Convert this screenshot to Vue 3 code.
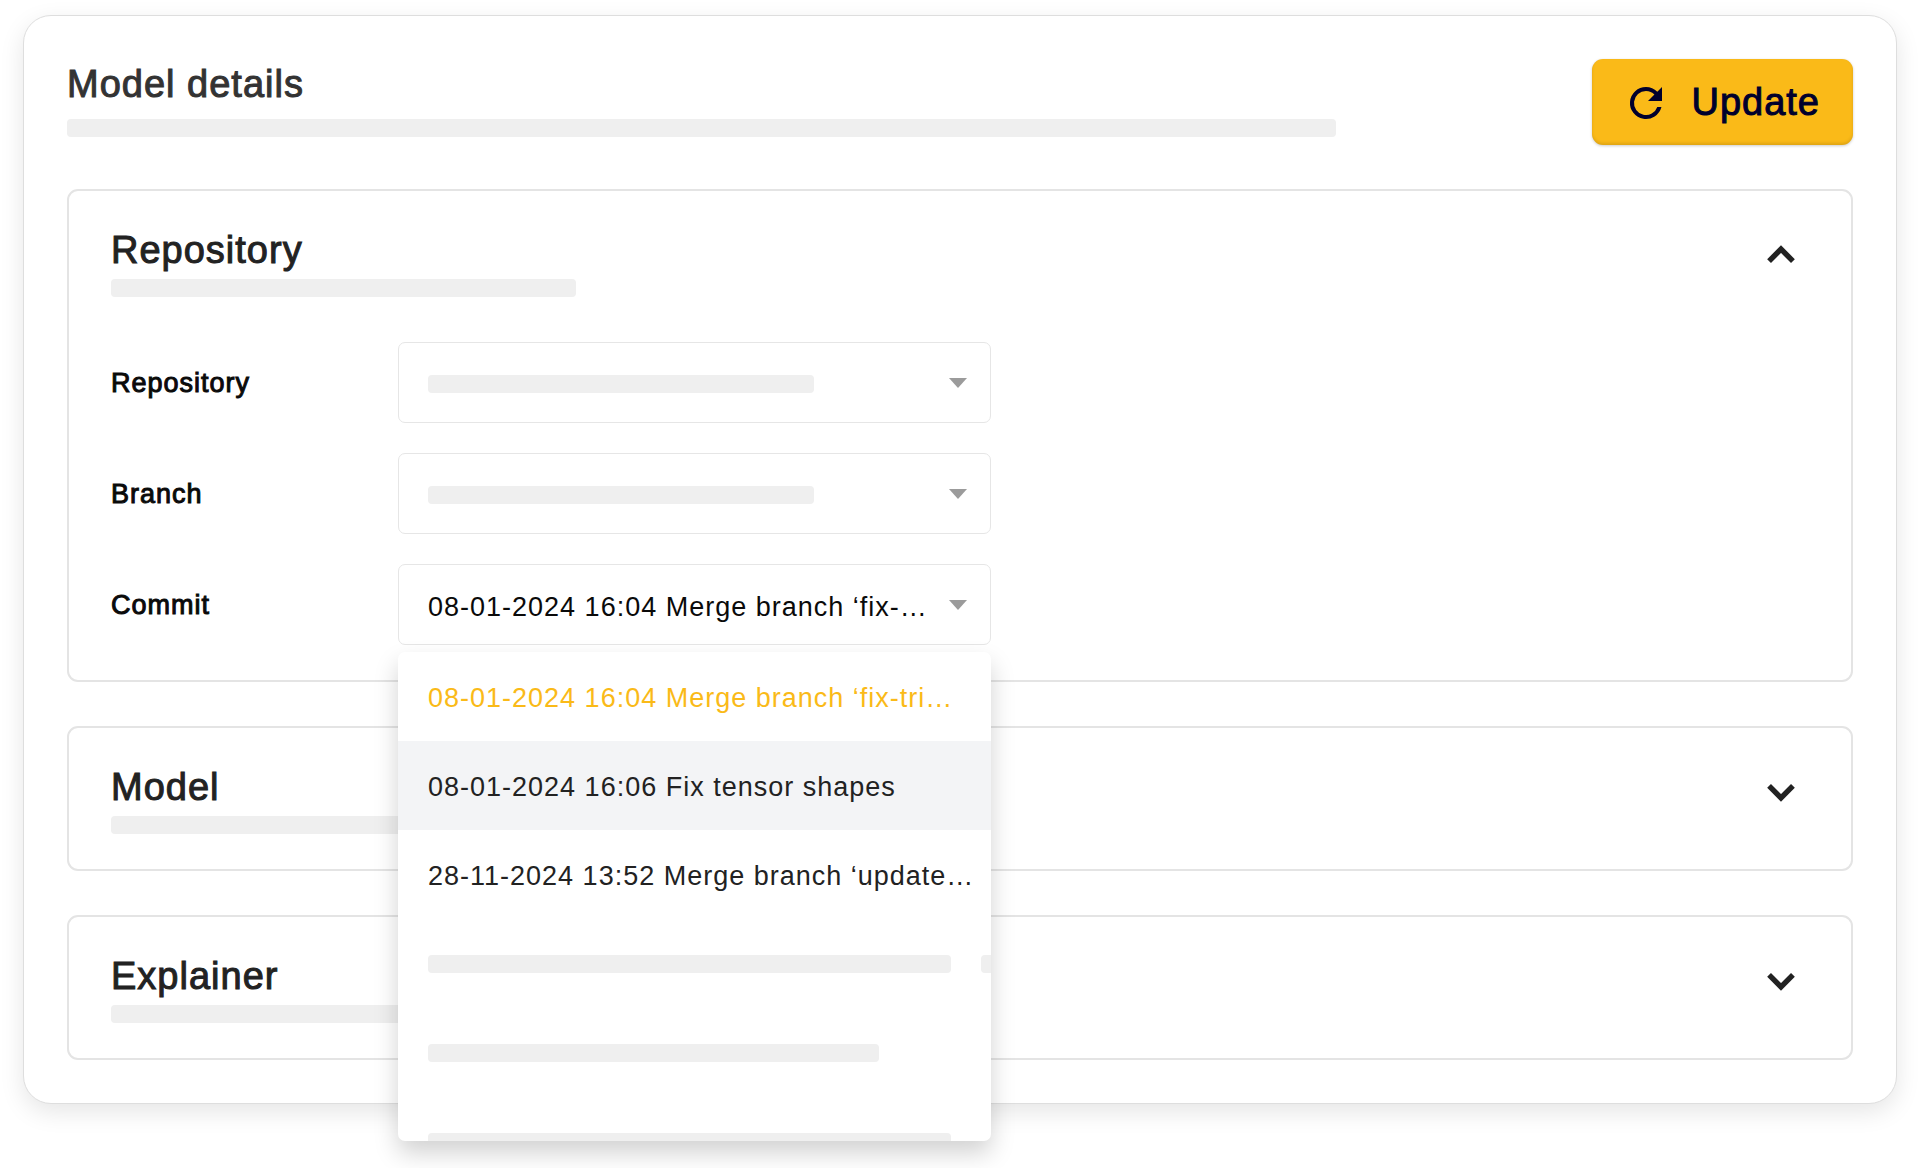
<script setup>
import { ref } from 'vue'

const fields = [
  { id: 'repository', label: 'Repository' },
  { id: 'branch', label: 'Branch' },
  { id: 'commit', label: 'Commit', value: '08-01-2024 16:04 Merge branch ‘fix-…' },
]

const commits = [
  '08-01-2024 16:04 Merge branch ‘fix-tri…',
  '08-01-2024 16:06 Fix tensor shapes',
  '28-11-2024 13:52 Merge branch ‘update…',
]
const selected = ref(0)
const hovered = ref(1)

const loading = [['long', 'long'], ['medium'], ['long']]
const collapsed = ['Model', 'Explainer']
</script>

<template>
  <main class="card">
    <header class="card-header">
      <div class="intro">
        <h1 class="heading title">Model details</h1>
        <span class="bar bar-title"></span>
      </div>
      <button class="update" type="button">
        <svg class="update-icon" viewBox="0 0 24 24" aria-hidden="true">
          <path d="M17.65 6.35A7.96 7.96 0 0 0 12 4a8 8 0 1 0 7.73 10h-2.08A6 6 0 1 1 12 6c1.66 0 3.14.69 4.22 1.78L13 11h7V4z" />
        </svg>
        Update
      </button>
    </header>

    <section class="panel">
      <div class="panel-header">
        <div class="intro">
          <h2 class="heading">Repository</h2>
          <span class="bar bar-subtitle"></span>
        </div>
        <button class="toggle" type="button" aria-label="Collapse Repository" aria-expanded="true">
          <svg viewBox="0 0 24 24" aria-hidden="true"><path d="M6.7 14.7L12 9.4l5.3 5.3" /></svg>
        </button>
      </div>

      <form class="fields">
        <div v-for="field in fields" :key="field.id" class="field">
          <label class="label" :for="field.id">{{ field.label }}</label>
          <div class="control">
            <select :id="field.id" class="select">
              <option>{{ field.value }}</option>
            </select>
            <span v-if="!field.value" class="bar bar-value"></span>
            <svg class="arrow" viewBox="0 0 18 10" aria-hidden="true"><path d="M0 0h18L9 10z" /></svg>

            <ul v-if="field.id === 'commit'" class="menu" role="listbox" aria-label="Commit">
              <li
                v-for="(commit, i) in commits"
                :key="commit"
                class="item commit"
                :class="{ selected: i === selected, hovered: i === hovered }"
                role="option"
                :aria-selected="i === selected"
                @mouseenter="hovered = i"
                @click="selected = i"
              >{{ commit }}</li>
              <li v-for="(row, i) in loading" :key="i" class="item" aria-hidden="true">
                <span v-for="(size, j) in row" :key="j" class="bar" :class="'bar-' + size"></span>
              </li>
            </ul>
          </div>
        </div>
      </form>
    </section>

    <section v-for="name in collapsed" :key="name" class="panel">
      <div class="panel-header">
        <div class="intro">
          <h2 class="heading">{{ name }}</h2>
          <span class="bar bar-subtitle"></span>
        </div>
        <button class="toggle" type="button" :aria-label="'Expand ' + name" aria-expanded="false">
          <svg viewBox="0 0 24 24" aria-hidden="true"><path d="M6.7 9.3l5.3 5.3 5.3-5.3" /></svg>
        </button>
      </div>
    </section>
  </main>
</template>

<style>
body {
  background: #fff;
}
</style>

<style scoped>
.card {
  box-sizing: border-box;
  display: flex;
  flex-direction: column;
  gap: 44px;
  margin: 15px 23px 64px;
  padding: 43px;
  border: 1px solid #dedede;
  border-radius: 28px;
  background: #fff;
  box-shadow: 0 8px 24px rgba(0, 0, 0, 0.1);
  color: #222;
  font-family: "Liberation Sans", Arial, sans-serif;
  font-size: 27px;
  letter-spacing: 1px;
}

.card-header,
.panel-header {
  display: flex;
  justify-content: space-between;
  align-items: flex-start;
  gap: 40px;
}

.intro {
  flex: 1;
  display: flex;
  flex-direction: column;
  gap: 6px;
}

.card-header .intro {
  gap: 12px;
  padding-top: 3px;
}

.heading {
  margin: 0;
  font-size: 38px;
  line-height: 45px;
  font-weight: 400;
  -webkit-text-stroke: 1px currentColor;
}

.title {
  color: #333;
}

.bar {
  flex: none;
  box-sizing: border-box;
  height: 18px;
  max-width: 100%;
  border-radius: 4px;
  background: #efefef;
}

.bar-title {
  width: 1269px;
}

.bar-subtitle {
  width: 465px;
}

.bar-long {
  width: 523px;
}

.bar-medium {
  width: 451px;
}

.update {
  display: flex;
  align-items: center;
  gap: 21px;
  height: 86px;
  padding: 1px 33px 0 30px;
  border: 0;
  border-radius: 11px;
  background: #faba18;
  box-shadow: inset 0 -2px 3px rgba(120, 80, 0, 0.2), 0 1px 3px rgba(0, 0, 0, 0.2);
  color: #00002d;
  font: inherit;
  font-size: 38px;
  letter-spacing: inherit;
  -webkit-text-stroke: 1px currentColor;
}

.update-icon {
  width: 48px;
  height: 48px;
  fill: currentColor;
  stroke: none;
}

.panel {
  padding: 37px 43px 35px 42px;
  border: 2px solid #e4e4e4;
  border-radius: 11px;
}

.toggle {
  width: 54px;
  height: 54px;
  padding: 0;
  border: 0;
  background: none;
  color: #222;
}

.toggle svg {
  display: block;
  width: 100%;
  height: 100%;
  fill: none;
  stroke: currentColor;
  stroke-width: 2.4;
}

.fields {
  display: flex;
  flex-direction: column;
  gap: 30px;
  margin-top: 45px;
}

.field {
  display: grid;
  grid-template-columns: 287px minmax(0, 593px);
  align-items: center;
}

.label {
  padding-top: 2px;
  color: #0a0a0a;
  -webkit-text-stroke: 1px currentColor;
}

.control {
  position: relative;
}

.select {
  display: block;
  box-sizing: border-box;
  width: 100%;
  height: 81px;
  padding: 4px 60px 0 29px;
  border: 1px solid #e6e6e6;
  border-radius: 7px;
  appearance: none;
  background: #fff;
  color: #0a0a0a;
  font: inherit;
  letter-spacing: inherit;
}

.bar-value {
  position: absolute;
  top: 33px;
  left: 30px;
  width: 386px;
  pointer-events: none;
}

.arrow {
  position: absolute;
  top: 36px;
  right: 24px;
  width: 18px;
  height: 10px;
  fill: #9b9b9b;
  pointer-events: none;
}

.menu {
  position: absolute;
  z-index: 1;
  top: calc(100% + 7px);
  left: 0;
  right: 0;
  box-sizing: border-box;
  height: 489px;
  margin: 0;
  padding: 0;
  overflow: hidden;
  border-radius: 7px;
  background: #fff;
  box-shadow: 0 12px 24px rgba(0, 0, 0, 0.18);
  list-style: none;
}

.item {
  box-sizing: border-box;
  display: flex;
  align-items: center;
  gap: 30px;
  height: 89px;
  padding-left: 30px;
  white-space: nowrap;
}

.commit {
  padding-top: 3px;
}

.item.hovered {
  background: #f3f4f6;
}

.item.selected {
  color: #faba18;
}
</style>
